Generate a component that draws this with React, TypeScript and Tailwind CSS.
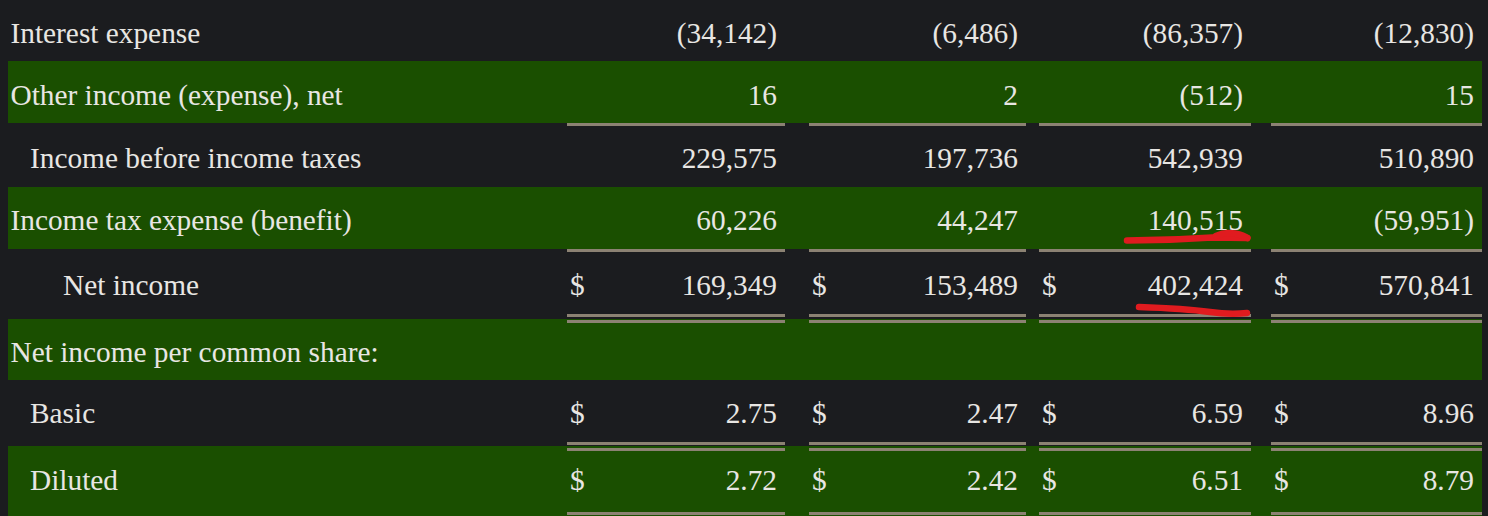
import React from "react";

type Vals = [string, string, string, string];

const widths = ["w-[218px]", "w-[217px]", "w-[212px]", "w-[211px]"];
const gaps = ["w-[24px]", "w-[13px]", "w-[20px]"];

function Row({
  label,
  labelCls,
  vals,
  dollar,
  green,
  cls,
}: {
  label: string;
  labelCls: string;
  vals: Vals;
  dollar?: boolean;
  green?: boolean;
  cls: string;
}) {
  return (
    <div className={`flex items-start ${green ? "bg-[#1a4f00]" : ""} ${cls}`}>
      <div className={`w-[559px] shrink-0 whitespace-nowrap ${labelCls}`}>{label}</div>
      {vals.map((v, i) => (
        <React.Fragment key={i}>
          <div className={`flex shrink-0 justify-between pl-[3px] pr-[8px] ${widths[i]}`}>
            <span>{dollar ? "$" : ""}</span>
            <span>{v}</span>
          </div>
          {i < 3 && <div className={`shrink-0 ${gaps[i]}`} />}
        </React.Fragment>
      ))}
    </div>
  );
}

function Lines() {
  return (
    <div className="flex h-[3px]">
      <div className="w-[559px] shrink-0" />
      {widths.map((w, i) => (
        <React.Fragment key={i}>
          <div className={`shrink-0 bg-[#8c8273] ${w}`} />
          {i < 3 && <div className={`shrink-0 ${gaps[i]}`} />}
        </React.Fragment>
      ))}
    </div>
  );
}

export default function App() {
  return (
    <div className="relative h-[516px] w-[1488px] overflow-hidden bg-[#1b1c1f] pl-[8px] pr-[6px] font-['Liberation_Serif','Times_New_Roman',serif] text-[29.33px] leading-[34px] text-[#e8e6e3]">
      <Row
        label="Interest expense"
        labelCls="pl-[2.5px]"
        vals={["(34,142)", "(6,486)", "(86,357)", "(12,830)"]}
        cls="h-[61px] pt-[15.5px]"
      />
      <Row
        label="Other income (expense), net"
        labelCls="pl-[2.5px]"
        vals={["16", "2", "(512)", "15"]}
        green
        cls="h-[62px] pt-[16.5px]"
      />
      <Lines />
      <Row
        label="Income before income taxes"
        labelCls="pl-[22px]"
        vals={["229,575", "197,736", "542,939", "510,890"]}
        cls="h-[61px] pt-[14.5px]"
      />
      <Row
        label="Income tax expense (benefit)"
        labelCls="pl-[2.5px]"
        vals={["60,226", "44,247", "140,515", "(59,951)"]}
        green
        cls="h-[62px] pt-[16px]"
      />
      <Lines />
      <Row
        label="Net income"
        labelCls="pl-[55px]"
        vals={["169,349", "153,489", "402,424", "570,841"]}
        dollar
        cls="h-[62px] pt-[15.5px]"
      />
      <div className="h-[5px]">
        <Lines />
      </div>
      <div className="h-[4px] bg-[#1a4f00] pt-[1px]">
        <Lines />
      </div>
      <Row
        label="Net income per common share:"
        labelCls="pl-[2.5px]"
        vals={["", "", "", ""]}
        green
        cls="h-[57px] pt-[11.5px]"
      />
      <Row
        label="Basic"
        labelCls="pl-[22px]"
        vals={["2.75", "2.47", "6.59", "8.96"]}
        dollar
        cls="h-[62px] pt-[16px]"
      />
      <div className="h-[4px]">
        <Lines />
      </div>
      <div className="h-[5px] bg-[#1a4f00] pt-[2px]">
        <Lines />
      </div>
      <Row
        label="Diluted"
        labelCls="pl-[22px]"
        vals={["2.72", "2.42", "6.51", "8.79"]}
        dollar
        green
        cls="h-[61px] pt-[11.5px]"
      />
      <div className="bg-[#1a4f00]">
        <Lines />
      </div>
      <div className="h-[20px] bg-[#1a4f00]" />

      <svg
        className="pointer-events-none absolute left-0 top-0"
        width="1488"
        height="516"
        viewBox="0 0 1488 516"
      >
        <g fill="none" stroke="#e01b1f" strokeWidth="6.5" strokeLinecap="round" strokeLinejoin="round">
          <path d="M1127 240.5 Q1170 240.5 1212 237.5 L1247 238" />
          <path d="M1216 236 Q1225 231.5 1235 233.5 Q1244 235.5 1247.5 238" />
          <path d="M1139 307 Q1185 308.5 1210 312 Q1230 315 1247 313" />
        </g>
      </svg>
    </div>
  );
}
